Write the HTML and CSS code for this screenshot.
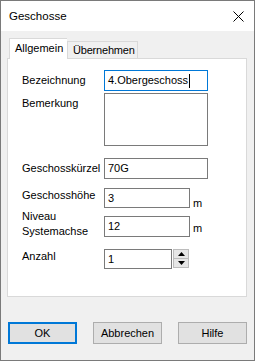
FILE: index.html
```html
<!DOCTYPE html>
<html lang="de">
  <head>
    <meta charset="utf-8" />
    <title>Geschosse</title>
    <link rel="stylesheet" href="styles.css">
  </head>
  <body>
    <div class="w-window">
      <!-- Title bar -->
      <header class="w-title">
        <span class="w-title__text">Geschosse</span>
        <svg class="w-title__close" width="11" height="11" viewBox="0 0 11 11">
          <path d="M0.5 0.5 L10.5 10.5 M10.5 0.5 L0.5 10.5" stroke="#000" stroke-width="1" fill="none" />
        </svg>
      </header>

      <div class="w-body">
        <!-- Tabs -->
        <nav class="w-tabs">
          <span class="w-tabs__tab w-tabs__tab--active">Allgemein</span>
          <span class="w-tabs__tab w-tabs__tab--second">Übernehmen</span>
        </nav>

        <!-- Tab page -->
        <section class="w-panel">
          <div class="w-row w-row--first">
            <label class="w-label w-label--mid">Bezeichnung</label>
            <div class="w-edit w-edit--focus">4.Obergeschoss<span class="w-caret"></span></div>
          </div>
          <div class="w-row w-row--memo">
            <label class="w-label w-label--mid">Bemerkung</label>
            <div class="w-edit w-edit--memo"></div>
          </div>
          <div class="w-row w-row--kuerzel">
            <label class="w-label w-label--mid">Geschosskürzel</label>
            <div class="w-edit">70G</div>
          </div>
          <div class="w-row w-row--hoehe">
            <label class="w-label">Geschosshöhe</label>
            <div class="w-edit w-edit--short w-edit--h20">3</div>
            <span class="w-unit w-unit--hoehe">m</span>
          </div>
          <div class="w-row w-row--niveau">
            <label class="w-label w-label--two">Niveau<br>Systemachse</label>
            <div class="w-edit w-edit--short">12</div>
            <span class="w-unit w-unit--niveau">m</span>
          </div>
          <div class="w-row w-row--anzahl">
            <label class="w-label">Anzahl</label>
            <div class="w-edit w-edit--spin w-edit--h20">1</div>
            <div class="w-spin">
              <span class="w-spin__btn"><svg width="7" height="4" viewBox="0 0 7 4"><path d="M3.5 0 L7 4 L0 4 Z" fill="#000" /></svg></span>
              <span class="w-spin__btn"><svg width="7" height="4" viewBox="0 0 7 4"><path d="M0 0 L7 0 L3.5 4 Z" fill="#000" /></svg></span>
            </div>
          </div>
        </section>

        <!-- Buttons -->
        <div class="w-buttons">
          <span class="w-button w-button--default">OK</span>
          <span class="w-button">Abbrechen</span>
          <span class="w-button">Hilfe</span>
        </div>
      </div>
    </div>
  </body>
</html>
```

FILE: styles.css
```css
/* Base */
html { box-sizing: border-box; }
*, *:before, *:after { box-sizing: inherit; }
body {
  margin: 0;
  font-family: "Liberation Sans", Arial, sans-serif;
  font-size: 11px;
  color: #000;
}
/* Window frame */
.w-window {
  width: 255px;
  height: 361px;
  border: 1px solid #7a7a7a;
  background-color: #f0f0f0;
  display: flex;
  flex-direction: column;
}
/* Title bar */
.w-title {
  height: 30px;
  background-color: #fff;
  display: flex;
  align-items: center;
  justify-content: space-between;
  padding: 0 10px 0 8px;
}
.w-title__text { font-size: 11.5px; }
.w-title__close { display: block; }
/* Body */
.w-body {
  padding: 7px 7px 0 6px;
}
/* Tabs */
.w-tabs {
  display: flex;
  align-items: flex-end;
  height: 20px;
  padding-left: 2px;
}
.w-tabs__tab {
  height: 17px;
  line-height: 16px;
  padding: 0 0 0 5px;
  border: 1px solid #d9d9d9;
  border-bottom: none;
  background-color: #f0f0f0;
  white-space: nowrap;
  overflow: hidden;
}
.w-tabs__tab--active {
  width: 58px;
  height: 21px;
  line-height: 19px;
  background-color: #fff;
  border-right: none;
  margin-bottom: -1px;
  position: relative;
  z-index: 1;
}
.w-tabs__tab--second {
  width: 71px;
  letter-spacing: -0.2px;
}
/* Tab page */
.w-panel {
  height: 239px;
  background-color: #fff;
  border: 1px solid #d9d9d9;
  padding: 11px 0 0 14px;
}
.w-row {
  display: flex;
  align-items: flex-start;
}
.w-row--memo { margin-top: 2px; }
.w-row--kuerzel { margin-top: 12px; }
.w-row--hoehe { margin-top: 9px; }
.w-row--niveau { margin-top: 5px; }
.w-row--anzahl { margin-top: 12px; }
.w-label {
  width: 82px;
  line-height: 15px;
  flex-shrink: 0;
}
.w-label--mid { margin-top: 3px; }
.w-label--two { margin-top: -7px; margin-bottom: -7px; }
/* Edit fields */
.w-edit {
  width: 104px;
  height: 21px;
  line-height: 19px;
  border: 1px solid #7a7a7a;
  background-color: #fff;
  padding-left: 3px;
  white-space: nowrap;
  display: flex;
  align-items: center;
}
.w-edit--focus { border-color: #0078d7; }
.w-edit--memo { height: 53px; }
.w-edit--short { width: 86px; }
.w-edit--spin { width: 68px; }
.w-edit--h20 { height: 20px; }
.w-caret {
  display: inline-block;
  width: 1px;
  height: 14px;
  background-color: #000;
  margin-left: 1px;
}
.w-unit {
  margin-left: 3px;
  line-height: 15px;
}
.w-unit--hoehe { margin-top: 8px; }
.w-unit--niveau { margin-top: 5px; }
/* Spinner */
.w-spin {
  width: 16px;
  height: 19px;
  margin-left: 1px;
  display: flex;
  flex-direction: column;
  border: 1px solid #bcbcbc;
  background-color: #e6e6e6;
}
.w-spin__btn {
  flex: 1;
  display: flex;
  align-items: center;
  justify-content: center;
}
.w-spin__btn + .w-spin__btn { border-top: 1px solid #bcbcbc; }
.w-spin__btn svg { display: block; }
/* Buttons */
.w-buttons {
  display: flex;
  gap: 16px;
  margin-top: 25px;
  padding-left: 1px;
}
.w-button {
  width: 70px;
  height: 22px;
  border: 1px solid #adadad;
  background-color: #e1e1e1;
  display: flex;
  align-items: center;
  justify-content: center;
}
.w-button--default {
  border: 2px solid #0078d7;
}
```
